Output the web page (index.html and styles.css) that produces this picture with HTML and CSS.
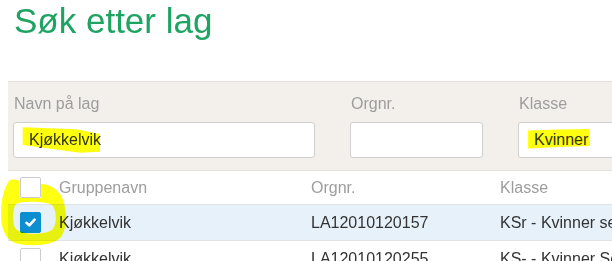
FILE: index.html
```html
<!DOCTYPE html>
<html lang="no">
<head>
<meta charset="utf-8">
<title>Søk etter lag</title>
<link rel="stylesheet" href="styles.css">
</head>
<body>
<div class="page">
  <h1 class="title">Søk etter lag</h1>

  <div class="filter">
    <div class="field">
      <label class="label">Navn på lag</label>
      <div class="input">
        <span class="val">Kjøkkelvik</span>
        <svg class="hl" width="100" height="36" viewBox="0 0 100 36"><polygon points="9.7,5.3 63.7,7.3 87,12 87,29.7 67,30.7 9.7,23" fill="#ffff10"/></svg>
      </div>
    </div>
    <div class="field">
      <label class="label">Orgnr.</label>
      <div class="input"></div>
    </div>
    <div class="field">
      <label class="label">Klasse</label>
      <div class="input">
        <span class="val">Kvinner</span>
        <svg class="hl" width="100" height="36" viewBox="0 0 100 36"><polygon points="10,8.5 40,7.5 71,7 72,24 40,25 10,26.5" fill="#ffff10"/></svg>
      </div>
    </div>
  </div>

  <div class="table">
    <div class="row head">
      <div class="cell"><span class="cb"></span></div>
      <div class="cell">Gruppenavn</div>
      <div class="cell">Orgnr.</div>
      <div class="cell">Klasse</div>
    </div>
    <div class="row selected">
      <div class="cell"><span class="cb checked"><svg width="21" height="21" viewBox="0 0 21 21"><polyline points="6.5,10.8 9.3,13.4 14.6,7.6" fill="none" stroke="#fff" stroke-width="2.6" stroke-linecap="round" stroke-linejoin="round"/></svg></span></div>
      <div class="cell">Kjøkkelvik</div>
      <div class="cell">LA12010120157</div>
      <div class="cell">KSr - Kvinner senior</div>
    </div>
    <div class="row">
      <div class="cell"><span class="cb"></span></div>
      <div class="cell">Kjøkkelvik</div>
      <div class="cell">LA12010120255</div>
      <div class="cell">KS- - Kvinner Senior</div>
    </div>
  </div>

  <svg class="ring" width="612" height="261" viewBox="0 0 612 261">
    <path fill="#ffff10" fill-rule="evenodd" d="M 9 181 C 11 179, 16 179, 19 181 L 19 198 L 41 198 L 41 184 C 51 184, 61 191, 64 203 C 67 214, 67 228, 61 237 C 53 246, 30 247, 15 243 C 4 239, 1 226, 1 214 C 1 200, 4 188, 9 181 Z M 16 204 C 13 208, 12 220, 15 228 C 20 235, 45 236, 53 229 C 57 223, 57 211, 52 205 C 45 201, 22 201, 16 204 Z"/>
  </svg>
</div>
</body>
</html>
```
FILE: styles.css
```css
html, body {
  margin: 0;
  padding: 0;
  overflow: hidden;
  background: #fff;
}

.page {
  position: relative;
  width: 612px;
  height: 261px;
  overflow: hidden;
  font-family: "Liberation Sans", Arial, sans-serif;
  font-size: 16px;
  color: #333;
}

.title {
  margin: 0;
  padding: 2px 0 0 14px;
  height: 81px;
  box-sizing: border-box;
  font-size: 35px;
  line-height: 38px;
  font-weight: normal;
  color: #1ea362;
}

.filter {
  margin-left: 8px;
  width: 700px;
  height: 90px;
  box-sizing: border-box;
  background: #f3f0ec;
  border-top: 1px solid #e4dfd9;
  border-bottom: 1px solid #e4dfd9;
  padding: 12px 0 0 5px;
  display: grid;
  grid-template-columns: 302px 133px 200px;
  column-gap: 35px;
}

.field {
  display: flex;
  flex-direction: column;
}

.label {
  display: block;
  padding-left: 1px;
  line-height: 20px;
  color: #9d9d9d;
}

.input {
  position: relative;
  margin-top: 8px;
  height: 36px;
  box-sizing: border-box;
  background: #fff;
  border: 1px solid #cfcfcf;
  border-radius: 3px;
  display: flex;
  align-items: center;
  padding-left: 15px;
}

.hl {
  position: absolute;
  left: -1px;
  top: -1px;
  mix-blend-mode: multiply;
}

.val {
  color: #333;
}

.table {
  margin-left: 8px;
  width: 700px;
}

.row {
  display: grid;
  grid-template-columns: 43px 252px 189px 1fr;
  height: 35px;
  align-items: center;
  border-bottom: 1px solid #dfe3e6;
  white-space: nowrap;
}

.row.head {
  height: 33px;
  color: #9d9d9d;
}

.row.selected {
  background: #e7f1fa;
}

.cell {
  padding-left: 8px;
  display: flex;
  align-items: center;
}

.cell:first-child {
  padding-left: 12px;
}

.cb {
  display: block;
  width: 21px;
  height: 21px;
  box-sizing: border-box;
  background: #fff;
  border: 1px solid #cccccc;
  border-radius: 2px;
}

.cb.checked {
  background: #0b8fd1;
  border-color: #0b8fd1;
  position: relative;
}

.cb.checked svg {
  position: absolute;
  left: -1px;
  top: -1px;
}

.ring {
  position: absolute;
  left: 0;
  top: 0;
  pointer-events: none;
  mix-blend-mode: multiply;
}
```
